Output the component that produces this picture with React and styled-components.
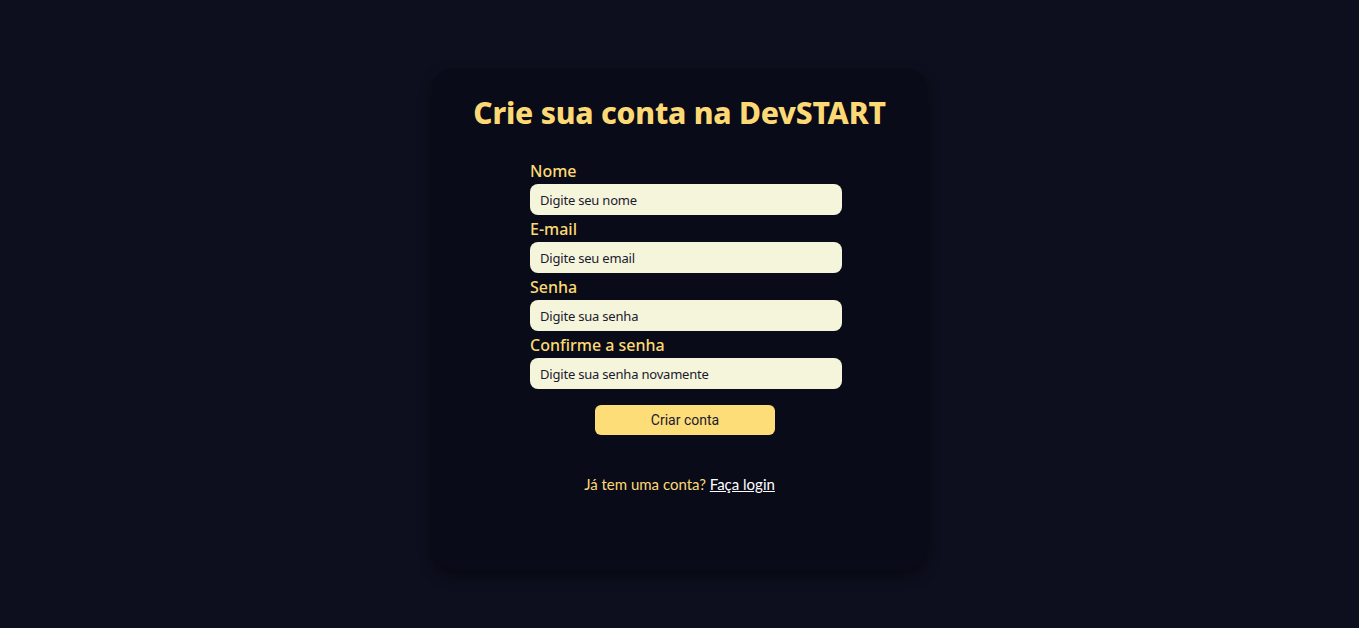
import React from "react";
import styled, { createGlobalStyle } from "styled-components";

const Global = createGlobalStyle`
  body {
    margin: 0;
    background: #0d0f1e;
    font-family: "Noto Sans", sans-serif;
  }
`;

const Page = styled.div`
  display: flex;
  justify-content: center;
  padding-top: 68px;
  min-height: 100vh;
  box-sizing: border-box;
`;

const Card = styled.div`
  width: 495px;
  height: 502px;
  box-sizing: border-box;
  background: #090b18;
  border-radius: 22px;
  box-shadow: 0 6px 14px rgba(0, 0, 0, 0.45);
  padding-top: 26px;
  display: flex;
  flex-direction: column;
`;

const Title = styled.h1`
  margin: 0;
  text-align: center;
  color: #fcd975;
  font-family: "Noto Sans", sans-serif;
  font-weight: 800;
  font-size: 30px;
  line-height: 38px;
  letter-spacing: -0.2px;
`;

const Form = styled.form`
  width: 312px;
  margin: 25px 0 0 98px;
  display: flex;
  flex-direction: column;
`;

const Label = styled.label`
  color: #fcd975;
  font-family: "Noto Sans", sans-serif;
  font-weight: 500;
  font-size: 16px;
  line-height: 29px;
  height: 27px;
`;

const Input = styled.input`
  height: 31px;
  box-sizing: border-box;
  border: none;
  border-radius: 8px;
  background: #f5f5dc;
  padding: 0 10px;
  font-family: "Noto Sans", sans-serif;
  font-size: 13px;
  letter-spacing: -0.2px;
  color: #1a1a2e;
  outline: none;

  &::placeholder {
    color: #1a1a2e;
  }
`;

const Button = styled.button`
  align-self: center;
  width: 180px;
  height: 30px;
  margin: 16px 2px 0 0;
  border: none;
  border-radius: 6px;
  background: #fddd78;
  color: #1a1a2e;
  font-family: Roboto, sans-serif;
  font-size: 14px;
  cursor: pointer;
`;

const Footer = styled.p`
  margin: 40px 0 0;
  text-align: center;
  color: #fcd975;
  font-family: Lato, sans-serif;
  font-size: 15px;

  a {
    color: #ffffff;
    text-decoration: underline;
  }
`;

const fields = [
  { id: "nome", label: "Nome", placeholder: "Digite seu nome" },
  { id: "email", label: "E-mail", placeholder: "Digite seu email" },
  { id: "senha", label: "Senha", placeholder: "Digite sua senha" },
  { id: "confirma", label: "Confirme a senha", placeholder: "Digite sua senha novamente" },
];

export default function App() {
  return (
    <Page>
      <Global />
      <Card>
        <Title>Crie sua conta na DevSTART</Title>
        <Form onSubmit={(e) => e.preventDefault()}>
          {fields.map((f) => (
            <React.Fragment key={f.id}>
              <Label htmlFor={f.id}>{f.label}</Label>
              <Input id={f.id} type="text" placeholder={f.placeholder} />
            </React.Fragment>
          ))}
          <Button type="submit">Criar conta</Button>
        </Form>
        <Footer>
          Já tem uma conta? <a href="#">Faça login</a>
        </Footer>
      </Card>
    </Page>
  );
}
